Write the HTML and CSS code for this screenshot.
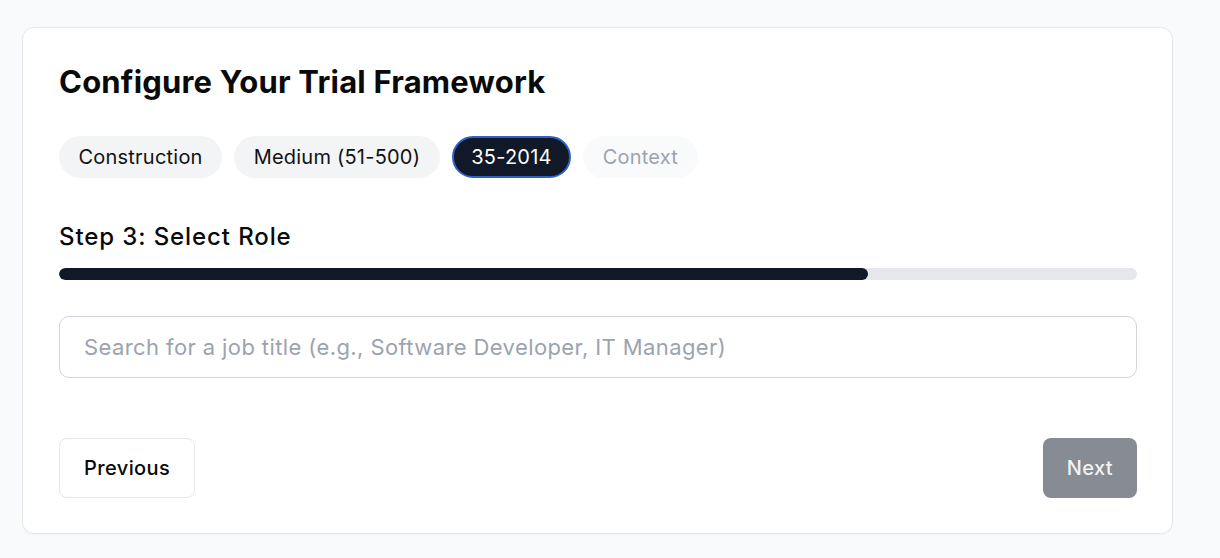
FILE: index.html
```html
<!DOCTYPE html>
<html lang="en">
<head>
<meta charset="utf-8">
<title>Configure Your Trial Framework</title>
<link rel="stylesheet" href="styles.css">
</head>
<body>
<main class="page">
  <section class="card">
    <h1 class="title">Configure Your Trial Framework</h1>
    <div class="chips">
      <span class="chip">Construction</span>
      <span class="chip">Medium (51-500)</span>
      <span class="chip chip-active">35-2014</span>
      <span class="chip chip-disabled">Context</span>
    </div>
    <h2 class="step">Step 3: Select Role</h2>
    <div class="progress"><div class="progress-fill" style="width: 75%"></div></div>
    <input class="search" type="text" placeholder="Search for a job title (e.g., Software Developer, IT Manager)">
    <div class="actions">
      <button class="btn btn-prev" type="button">Previous</button>
      <button class="btn btn-next" type="button" disabled>Next</button>
    </div>
  </section>
</main>
</body>
</html>
```
FILE: styles.css
```css
* { box-sizing: border-box; }
html, body { margin: 0; padding: 0; }
body {
  background: #f9fafb;
  font-family: Inter, "Noto Sans", "Liberation Sans", sans-serif;
  color: #0a0a0a;
}
.page {
  padding: 27px 47px 24px 22px;
}
.card {
  background: #ffffff;
  border: 1px solid #e5e7eb;
  border-radius: 12px;
  padding: 36px 35px 35px 36px;
  display: flex;
  flex-direction: column;
  box-shadow: 0 1px 2px rgba(0,0,0,0.03);
}
.title {
  margin: 0;
  font-size: 31px;
  line-height: 36px;
  font-weight: 700;
  letter-spacing: 0.2px;
  color: #0a0a0a;
}
.chips {
  display: flex;
  gap: 12px;
  margin-top: 36px;
}
.chip {
  display: inline-flex;
  align-items: center;
  height: 42px;
  padding: 0 17.5px;
  border-radius: 21px;
  background: #f3f4f6;
  font-size: 20px;
  letter-spacing: 0.22px;
  color: #111111;
  border: 2px solid transparent;
}
.chip-active {
  background: #111827;
  color: #ffffff;
  border-color: #2f62c8;
}
.chip-disabled {
  background: #f9fafb;
  color: #9ca3af;
}
.step {
  margin: 43px 0 0;
  font-size: 24px;
  line-height: 32px;
  font-weight: 500;
  letter-spacing: 0.9px;
  color: #0a0a0a;
}
.progress {
  margin-top: 15px;
  height: 12px;
  border-radius: 6px;
  background: #e5e7eb;
  overflow: hidden;
}
.progress-fill {
  height: 100%;
  background: #111827;
  border-radius: 6px;
}
.search {
  margin-top: 36px;
  height: 62px;
  width: 100%;
  border: 1px solid #d1d5db;
  border-radius: 10px;
  padding: 0 24px;
  font-family: inherit;
  font-size: 22px;
  letter-spacing: 0.4px;
  color: #111111;
  background: #fff;
  outline: none;
}
.search::placeholder { color: #9ca3af; }
.actions {
  margin-top: 60px;
  display: flex;
  justify-content: space-between;
}
.btn {
  height: 60px;
  border-radius: 8px;
  font-family: inherit;
  font-size: 20px;
  font-weight: 500;
  letter-spacing: 0.4px;
  padding: 0 24px;
  cursor: pointer;
}
.btn-prev {
  background: #ffffff;
  border: 1px solid #e5e7eb;
  color: #0a0a0a;
}
.btn-next {
  background: #878b94;
  border: none;
  color: #f1f2f4;
}
```
